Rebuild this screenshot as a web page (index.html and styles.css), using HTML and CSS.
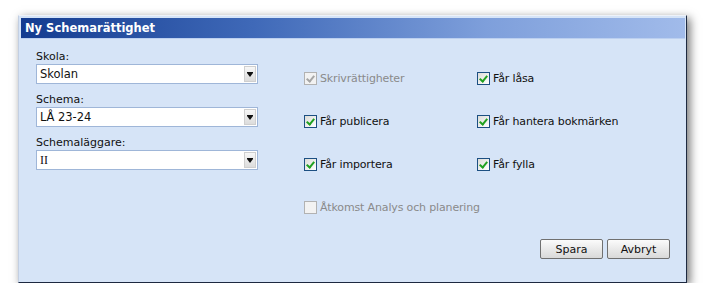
FILE: index.html
```html
<!DOCTYPE html>
<html lang="sv">
<head>
  <meta charset="UTF-8">
  <meta name="viewport" content="width=device-width, initial-scale=1.0">
  <title>Ny Schemarättighet</title>
  <link rel="stylesheet" href="styles.css">
</head>
<body>
  <div class="dialog">
    <div class="title">Ny Schemarättighet</div>
    <div class="content">
      <div class="form">
        <div class="fields">
          <div class="field">
            <label>Skola:</label>
            <div class="select"><span>Skolan</span><i class="arrow"></i></div>
          </div>
          <div class="field">
            <label>Schema:</label>
            <div class="select"><span>LÅ 23-24</span><i class="arrow"></i></div>
          </div>
          <div class="field">
            <label>Schemaläggare:</label>
            <div class="select"><span class="serif">II</span><i class="arrow"></i></div>
          </div>
        </div>

        <div class="checks">
          <div class="check disabled"><i class="box on"></i>Skrivrättigheter</div>
          <div class="check"><i class="box on"></i>Får låsa</div>
          <div class="check"><i class="box on"></i>Får publicera</div>
          <div class="check"><i class="box on"></i>Får hantera bokmärken</div>
          <div class="check"><i class="box on"></i>Får importera</div>
          <div class="check"><i class="box on"></i>Får fylla</div>
          <div class="check disabled"><i class="box"></i>Åtkomst Analys och planering</div>
        </div>
      </div>

      <div class="buttons">
        <button type="button">Spara</button>
        <button type="button">Avbryt</button>
      </div>
    </div>
  </div>
</body>
</html>
```

FILE: styles.css
```css
* {
  margin: 0;
  padding: 0;
  box-sizing: border-box;
}

body {
  background: #fff;
  font-family: "DejaVu Sans", Verdana, sans-serif;
  font-size: 11px;
  color: #111;
}

/* Dialog window */
.dialog {
  margin: 15px 0 0 18px;
  width: 669px;
  height: 268px;
  display: flex;
  flex-direction: column;
  background: #d6e4f7;
  border: 1px solid;
  border-color: #eef2f9 #1d2940 #1d2940 #c3cfe2;
  padding: 2px 1px 1px 2px;
  box-shadow: 3px 3px 9px rgba(0, 0, 0, 0.55);
}

.title {
  height: 21px;
  padding-left: 4px;
  line-height: 20px;
  font-size: 11.5px;
  font-weight: bold;
  color: #fff;
  background: linear-gradient(to right, #143c90, #3f69b8 35%, #7e9fdb 70%, #a1bbea);
  border-bottom: 1px solid #bcd0f0;
}

.content {
  flex: 1;
  display: flex;
  flex-direction: column;
  padding: 11px 15px 22px 15px;
}

.form {
  display: flex;
}

/* Left column with dropdowns */
.fields {
  width: 222px;
  display: flex;
  flex-direction: column;
  gap: 9px;
}

.field label {
  display: block;
  height: 14px;
  line-height: 14px;
}

.select {
  height: 20px;
  display: flex;
  align-items: center;
  background: #fff;
  border: 1px solid #9fb6d8;
  padding: 0 1px 0 3px;
  font-size: 11.5px;
}

.select span {
  flex: 1;
}

.select .serif {
  font-family: "Liberation Serif", serif;
  font-size: 12px;
}

.arrow {
  width: 12px;
  height: 16px;
  background: linear-gradient(#f7f7f7, #dcdcdc);
  border: 1px solid #cfcfcf;
  position: relative;
}

.arrow::after {
  content: "";
  position: absolute;
  left: 2px;
  top: 6px;
  border-left: 3px solid transparent;
  border-right: 3px solid transparent;
  border-top: 4px solid #111;
  box-shadow: 0 -1px 0 #111;
}

/* Checkbox grid */
.checks {
  margin-left: 46px;
  padding-top: 21px;
  display: grid;
  grid-template-columns: 173px auto;
  row-gap: 29px;
}

.check {
  display: flex;
  align-items: center;
  height: 14px;
  gap: 3px;
  white-space: nowrap;
  letter-spacing: -0.15px;
}

.check.disabled {
  color: #8a8a8a;
}

.box {
  width: 13px;
  height: 13px;
  flex: none;
  border: 1px solid #1c4f82;
  background: linear-gradient(135deg, #dcdcd7, #fff);
  position: relative;
}

.box.on::after {
  content: "";
  position: absolute;
  left: 3px;
  top: 1px;
  width: 3px;
  height: 6px;
  border-right: 2px solid #21a121;
  border-bottom: 2px solid #21a121;
  transform: rotate(40deg);
}

.disabled .box {
  border-color: #b2b2b2;
  background: #f2f2f2;
}

.disabled .box.on::after {
  border-color: #a6a6a6;
}

/* Buttons */
.buttons {
  margin-top: auto;
  display: flex;
  justify-content: flex-end;
  gap: 4px;
}

button {
  width: 63px;
  height: 20px;
  font-family: "DejaVu Sans", Verdana, sans-serif;
  font-size: 11px;
  color: #111;
  background: linear-gradient(#fbfbfb, #e6e6e6 60%, #d9d9d9);
  border: 1px solid #707070;
  border-radius: 2px;
}
```
